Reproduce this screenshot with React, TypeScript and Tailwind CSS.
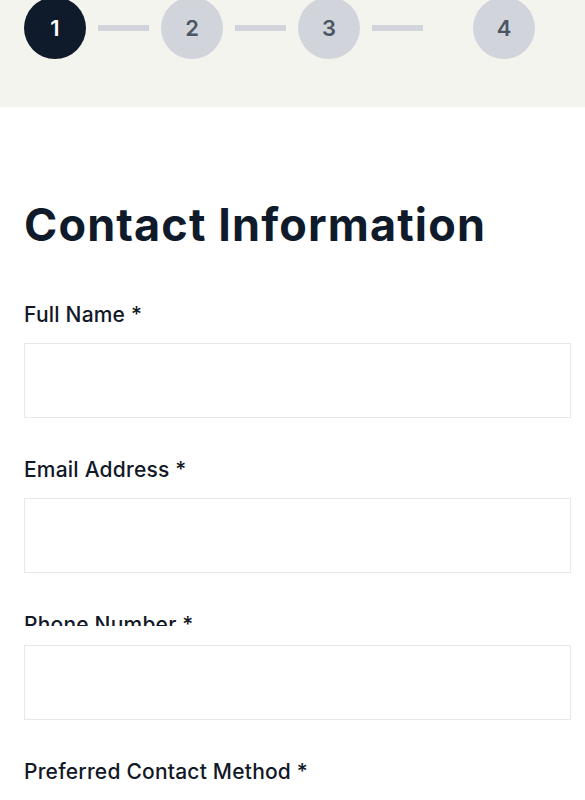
import React from 'react';

const steps = [1, 2, 3, 4];

const Field = ({ label, clipped }: { label: string; clipped?: boolean }) => (
  <div className="mb-[38px]">
    <label
      className={
        clipped
          ? 'block h-[15px] overflow-hidden text-[21px] leading-7 font-medium tracking-[0.01em] text-[#111827] mb-[19px]'
          : 'block h-7 text-[21px] leading-7 font-medium tracking-[0.01em] text-[#111827] mb-[14px]'
      }
    >
      {label}
    </label>
    <input type="text" className="block w-full h-[75px] border border-[#e9e9e3] bg-white outline-none px-4" />
  </div>
);

export default function App() {
  return (
    <div className="min-h-screen bg-white font-['Inter',sans-serif]">
      {/* stepper */}
      <div className="h-[107px] bg-[#f4f4ef] px-6 overflow-hidden">
        <div className="flex items-center -mt-[3px]">
          {steps.map((s, i) => (
            <React.Fragment key={s}>
              <div
                className={
                  s === 1
                    ? 'w-[62px] h-[62px] shrink-0 rounded-full bg-[#0f1b2a] text-white flex items-center justify-center text-[22px] font-semibold'
                    : 'w-[62px] h-[62px] shrink-0 rounded-full bg-[#d1d5db] text-[#4b5563] flex items-center justify-center text-[22px] font-semibold'
                }
              >
                {s}
              </div>
              {i < steps.length - 1 && (
                <div className={i === 2 ? 'h-1.5 w-[51px] ml-3 mr-[50px] bg-[#d1d5db]' : 'h-1.5 w-[51px] mx-3 bg-[#d1d5db]'} />
              )}
            </React.Fragment>
          ))}
        </div>
      </div>

      {/* form */}
      <div className="pl-6 pr-[14px] pt-[95px]">
        <h2 className="text-[45px] leading-none font-bold text-[#0f1b2a] tracking-[0.025em] mb-[54px]">Contact Information</h2>
        <Field label="Full Name *" />
        <Field label="Email Address *" />
        <Field label="Phone Number *" clipped />
        <Field label="Preferred Contact Method *" />
      </div>
    </div>
  );
}
